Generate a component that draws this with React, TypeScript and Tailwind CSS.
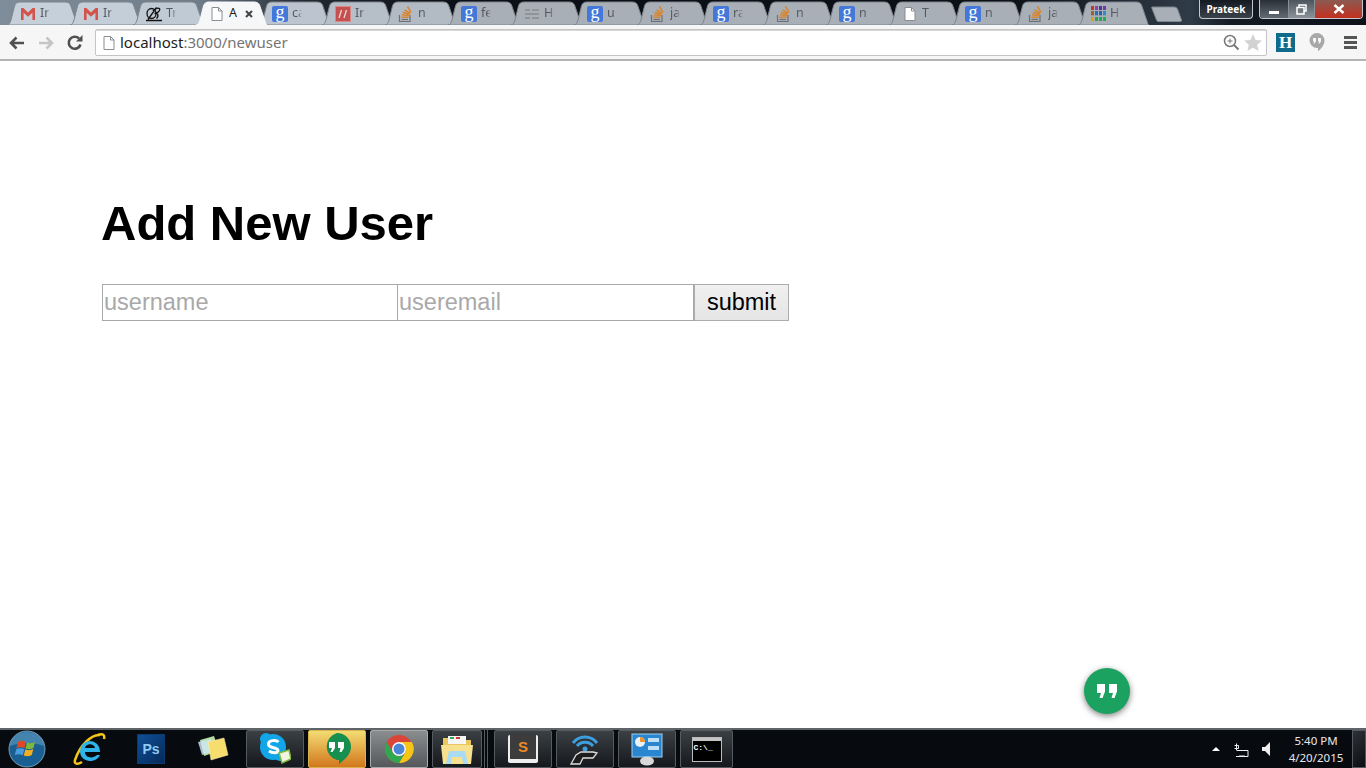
// Chrome on Windows 7 showing the "Add New User" form.

type TabKind = 'gmail' | 'pen' | 'page' | 'google' | 'slash' | 'stack' | 'list' | 'grid';

const tabs: { kind: TabKind; label: string; active?: boolean; tone?: string }[] = [
  { kind: 'gmail', label: 'Ir', tone: '#c6d0db' },
  { kind: 'gmail', label: 'Ir', tone: '#c4ced9' },
  { kind: 'pen', label: 'Tr', tone: '#c0cad5' },
  { kind: 'page', label: 'A', active: true },
  { kind: 'google', label: 'ca', tone: '#bcc5cf' },
  { kind: 'slash', label: 'Ir', tone: '#b6bec8' },
  { kind: 'stack', label: 'n', tone: '#b2bac3' },
  { kind: 'google', label: 'fe' },
  { kind: 'list', label: 'H' },
  { kind: 'google', label: 'u' },
  { kind: 'stack', label: 'ja' },
  { kind: 'google', label: 'ra' },
  { kind: 'stack', label: 'n' },
  { kind: 'google', label: 'n' },
  { kind: 'page', label: 'T' },
  { kind: 'google', label: 'n' },
  { kind: 'stack', label: 'ja' },
  { kind: 'grid', label: 'H' },
];

function PageGlyph() {
  return (
    <svg width="16" height="16" viewBox="0 0 16 16" fill="none">
      <path d="M3 1.5h6.5L13 5v9.5H3z" fill="#fff" stroke="#8a8d91" />
      <path d="M9.5 1.5V5H13" stroke="#8a8d91" />
    </svg>
  );
}

function Favicon({ kind }: { kind: TabKind }) {
  if (kind === 'page') return <PageGlyph />;
  if (kind === 'gmail') {
    return (
      <svg width="16" height="16" viewBox="0 0 16 16">
        <path d="M1 2h2.400L8 6.400 12.600 2H15v12h-2.600V6.800L8 10.800 3.600 6.800V14H1z" fill="#d2544a" />
      </svg>
    );
  }
  if (kind === 'google') {
    return (
      <div className="flex h-4 w-4 items-center justify-center rounded-[2px] bg-[#4478d8] pb-[3px] font-['Liberation_Serif',serif] text-[18px] leading-none text-white">
        g
      </div>
    );
  }
  if (kind === 'pen') {
    return (
      <svg width="16" height="16" viewBox="0 0 16 16" fill="none" stroke="#111" strokeWidth="1.300">
        <ellipse cx="5.500" cy="7.500" rx="4.500" ry="5" />
        <path d="M2 13.500 10.500 1.500M7 5c3-4 8-3.500 6.500-.5S10 7 8.500 7.500c3-.5 5 1.500 2 5M0 14.500h16" />
      </svg>
    );
  }
  if (kind === 'slash') {
    return (
      <svg width="16" height="16" viewBox="0 0 16 16" fill="none">
        <rect x="0.5" y="0.5" width="15" height="15" fill="#c4504f" stroke="#d88a88" />
        <path d="M6.5 4 4 12M11.5 4 9 12" stroke="#f3d5d3" strokeWidth="1.3" />
      </svg>
    );
  }
  if (kind === 'stack') {
    return (
      <svg width="16" height="16" viewBox="0 0 16 16" fill="none">
        <path d="M1.500 9v6.500h10.500V9" stroke="#6e7073" strokeWidth="1.200" />
        <path d="M3.500 13.500h6.500" stroke="#6e7073" strokeWidth="1.200" />
        <path d="M3.500 11.200h7M4 8.800l6.800.8M4.800 6.200l6.500 2M6.500 3.800l5.800 3.500M9.500 .5l3.500 5.800" stroke="#d9852c" strokeWidth="1.500" />
      </svg>
    );
  }
  if (kind === 'list') {
    return (
      <svg width="16" height="16" viewBox="0 0 16 16" fill="#8f9499">
        <rect x="1" y="3" width="5" height="2" />
        <rect x="8" y="3" width="7" height="2" />
        <rect x="1" y="7" width="14" height="2" />
        <rect x="1" y="11" width="5" height="2" />
        <rect x="8" y="11" width="7" height="2" />
      </svg>
    );
  }
  const colors = ['#c0392b', '#8e44ad', '#5b2fa0', '#6a3ea8', '#a0622a', '#2c6fb8', '#2a62b0', '#2f8fc0', '#d8a016', '#2ba24c', '#27a84f', '#1fae58'];
  return (
    <div className="grid h-[15px] w-[15px] grid-cols-4 gap-px">
      {colors.map((color, i) => (
        <svg key={i} viewBox="0 0 3 4" preserveAspectRatio="none" className="h-full w-full">
          <rect width="3" height="4" fill={color} />
        </svg>
      ))}
    </div>
  );
}

function TabShape({ fill, stroke }: { fill: string; stroke: string }) {
  return (
    <svg viewBox="0 0 71 24" width="71" height="24" className="absolute inset-0">
      <path d="M0 24C2 24 3 22 4 19L7.500 5C8.500 2 10 1 13 1H58C61 1 62.500 2 63.500 4L69 20C70 23 70 24 71 24Z" fill={fill} stroke={stroke} strokeWidth="1" />
    </svg>
  );
}

function Tab({ kind, label, active, tone = '#a9afb7' }: { kind: TabKind; label: string; active?: boolean; tone?: string }) {
  return (
    <div className={active ? 'relative z-10 -mr-2 h-6 w-[71px] shrink-0' : 'relative -mr-2 h-6 w-[71px] shrink-0'}>
      <TabShape fill={active ? '#f6f7f8' : tone} stroke={active ? '#f6f7f8' : '#7f858d'} />
      <div className="relative flex h-6 items-center pl-[13px] pt-px">
        <Favicon kind={kind} />
        <span
          className={
            active
              ? "ml-[4px] w-[12px] overflow-hidden font-['Noto_Sans',sans-serif] text-[12.500px] text-[#222]"
              : "ml-[4px] w-[10px] overflow-hidden font-['Noto_Sans',sans-serif] text-[12.500px] text-[#555a60] [mask-image:linear-gradient(90deg,#000_60%,transparent)]"
          }
        >
          {label}
        </span>
        {active && (
          <svg width="10" height="10" viewBox="0 0 10 10" className="ml-[3px]" stroke="#444" strokeWidth="2">
            <path d="M2 2l6 6M8 2 2 8" />
          </svg>
        )}
      </div>
    </div>
  );
}

function WindowControls() {
  return (
    <div className="absolute right-[3px] top-0 flex text-white">
      <div className="mr-[6px] flex h-[19px] w-[54px] items-center justify-center rounded-b-[4px] border border-t-0 border-[#c3c8ce] bg-[linear-gradient(#141a21,#3a424b)] font-['Noto_Sans',sans-serif] text-[10px] font-bold">
        Prateek
      </div>
      <div className="flex h-[19px] overflow-hidden rounded-b-[4px] border border-t-0 border-[#c3c8ce]">
        <div className="flex w-[29px] items-end justify-center border-r border-[#8b9097] bg-[linear-gradient(#2a3038,#626a73)] pb-[4px]">
          <div className="h-[3px] w-[10px] bg-white" />
        </div>
        <div className="flex w-[26px] items-center justify-center border-r border-[#8b9097] bg-[linear-gradient(#4c545e,#8b929a)]">
          <svg width="11" height="11" viewBox="0 0 11 11" fill="none" stroke="#fff" strokeWidth="1.500">
            <path d="M3 3V1h7v6H8M1 3.500h7v6.500H1z" />
          </svg>
        </div>
        <div className="flex w-[47px] items-center justify-center bg-[linear-gradient(#8c5a52,#c4301f)]">
          <svg width="12" height="10" viewBox="0 0 12 10" stroke="#fff" strokeWidth="2.400">
            <path d="M1.500 1l9 8M10.500 1l-9 8" />
          </svg>
        </div>
      </div>
    </div>
  );
}

function TabStrip() {
  return (
    <div className="relative h-[25px] shrink-0 bg-[linear-gradient(90deg,#7f8d9b_0px,#6e7b88_200px,#242a33_300px,#0b0f16_450px,#0b0f16_1000px,#2f3b47_1190px,#141b24_1230px,#0d1219_1366px)] pl-[7px]">
      <div className="flex h-[25px] items-end">
        {tabs.map((tab, i) => (
          <Tab key={i} {...tab} />
        ))}
        <svg width="32" height="16" viewBox="0 0 32 16" className="ml-[10px] mb-[3px] shrink-0">
          <path d="M1 1H23C25 1 26 2 26.500 3L30.500 14C31 15 30 15.500 29 15.500H8C6.500 15.500 6 15 5.500 14L1 2.500C.5 1.500 .5 1 1 1Z" fill="#a9afb7" stroke="#7f858d" />
        </svg>
      </div>
      <WindowControls />
    </div>
  );
}

function Toolbar() {
  return (
    <div className="flex h-[36px] shrink-0 items-center border-b-2 border-[#b4b4b4] bg-[#f6f6f6] pt-px">
      <svg width="18" height="16" viewBox="0 0 18 16" className="ml-2" fill="none" stroke="#505050" strokeWidth="2.600">
        <path d="M16 8H3M8.500 2.500 3 8l5.500 5.500" />
      </svg>
      <svg width="18" height="16" viewBox="0 0 18 16" className="ml-[11px]" fill="none" stroke="#c5c5c5" strokeWidth="2.600">
        <path d="M2 8h13M9.500 2.500 15 8l-5.500 5.500" />
      </svg>
      <svg width="18" height="18" viewBox="0 0 18 18" className="ml-[11px]" fill="none">
        <path d="M14.500 10.500A6 6 0 1 1 13 4.500" stroke="#505050" strokeWidth="2.600" />
        <path d="M10 7.500h6.500V1z" fill="#505050" />
      </svg>
      <div className="ml-[11px] flex h-[27px] w-[1172px] items-center rounded-[2px] border border-[#c4c4c4] bg-white pl-[5px] pr-1 shadow-[inset_0_1px_0_#d8d8d8]">
        <PageGlyph />
        <span className="ml-[3px] font-['Noto_Sans',sans-serif] text-[15px] text-[#222]">
          localhost<span className="text-[#757575]">:3000/newuser</span>
        </span>
        <svg width="17" height="17" viewBox="0 0 17 17" className="ml-auto" fill="none" stroke="#777" strokeWidth="1.500">
          <circle cx="7" cy="7" r="5.500" />
          <path d="M4.500 7h5M7 4.500v5" strokeWidth="1" />
          <path d="M11 11l4.500 4.500" strokeWidth="2" />
        </svg>
        <svg width="18" height="17" viewBox="0 0 18 17" className="ml-[4px]" fill="#d2d2d2">
          <path d="M9 0l2.600 5.900 6.400.6-4.800 4.200 1.400 6.300L9 13.800 3.400 17l1.400-6.300L0 6.500l6.400-.6z" />
        </svg>
      </div>
      <div className="ml-[9px] flex h-[19px] w-[19px] items-center justify-center bg-[#0f6a8b] font-['Liberation_Serif',serif] text-[17px] font-bold leading-none text-white">
        H
      </div>
      <svg width="16" height="19" viewBox="0 0 16 19" className="ml-[14px]">
        <path d="M8 0a7.500 7.500 0 0 1 7.500 7.500c0 5-4 8.500-6.500 11v-3.500H8A7.500 7.500 0 0 1 8 0z" fill="#a8a8a8" />
        <path d="M4 5h3v3.500L5.500 10.500H4.500L5 8.500H4zM9 5h3v3.500L10.500 10.500H9.500L10 8.500H9z" fill="#f6f6f6" />
      </svg>
      <div className="ml-[19px] flex w-[13px] flex-col gap-[2px]">
        <div className="h-[3px] bg-[#555]" />
        <div className="h-[3px] bg-[#555]" />
        <div className="h-[3px] bg-[#555]" />
      </div>
    </div>
  );
}

function UserForm() {
  return (
    <main className="relative flex-1 px-[102px] pt-[130px] font-['Liberation_Sans',sans-serif]">
      <h1 className="-ml-px text-[49px] font-bold leading-[64px] text-black">Add New User</h1>
      <form className="mt-[29px] flex">
        <input
          placeholder="username"
          className="h-[37px] w-[296px] border border-[#a9a9a9] pl-px pr-[2px] text-[23.500px] placeholder:text-[#a9a9a9]"
        />
        <input
          placeholder="useremail"
          className="h-[37px] w-[296px] border border-[#a9a9a9] border-l-0 pl-px pr-[2px] text-[23.500px] placeholder:text-[#a9a9a9]"
        />
        <button
          type="button"
          className="h-[37px] w-[95px] border border-[#acacac] bg-[linear-gradient(#f0f0f0,#e5e5e5)] pb-[2px] text-[23.500px] text-black"
        >
          submit
        </button>
      </form>
      <div className="absolute bottom-[14px] left-[1084px] flex h-[46px] w-[46px] items-center justify-center rounded-full bg-[#1ba261] shadow-[0_2px_6px_rgba(0,0,0,0.5)]">
        <svg width="22" height="14" viewBox="0 0 22 14" fill="#fff">
          <path d="M1 0h8v7.500L6.500 14H3.500L5 9H1zM13 0h8v7.500L18.500 14H15.500L17 9H13z" />
        </svg>
      </div>
    </main>
  );
}

function TaskButton({ children, width = 'w-[58px]', bg = 'bg-[linear-gradient(#3b4045,#15181c)]', border = 'border-[#565b60]' }: { children: React.ReactNode; width?: string; bg?: string; border?: string }) {
  return <div className={`flex h-[38px] items-center justify-center rounded-[2px] border ${width} ${bg} ${border}`}>{children}</div>;
}

function Taskbar() {
  return (
    <footer className="flex h-10 shrink-0 items-center border-t-2 border-[#5f6469] bg-[#070b10] text-white">
      <div className="flex w-[58px] justify-center pr-1">
        <svg width="38" height="38" viewBox="0 0 38 38">
          <circle cx="19" cy="19" r="18" fill="#1a5f92" stroke="#8fb4cc" strokeWidth="0.800" />
          <path d="M2 16a17 14 0 0 1 34 0c-10-4-24-4-34 0z" fill="#6fa8cc" opacity="0.500" />
          <path d="M10 12c3-2 5-1 8 0l-1.500 6c-3-1-5-1-8 0z" fill="#dc4a2a" />
          <path d="M19 12.500c3 1 5 1 8-.5l-1.500 6c-3 1.500-5 1.500-8 .5z" fill="#7cb83b" />
          <path d="M8.300 19c3-1 5-1 8 0l-1.500 6c-3-1-5-1-8 0z" fill="#4a9ae0" />
          <path d="M17.300 19.500c3 1 5 1 8-.5l-1.500 6c-3 1.500-5 1.500-8 .5z" fill="#f2b01e" />
        </svg>
      </div>
      <div className="flex w-[62px] justify-center">
        <svg width="34" height="36" viewBox="0 0 34 36" fill="none">
          <path d="M28 4C20 3 8 14 3 29c-1 4 2 5 7 2" stroke="#f5c518" strokeWidth="2.500" />
          <path d="M26 4c5-2 7 0 6 4" stroke="#f5c518" strokeWidth="2.500" />
          <path d="M8 20a10 10 0 0 1 20 0v1H13c0 6 8 7 12 3h3c-4 9-20 8-20-4zM13 17h10c-1-5-9-5-10 0z" fill="#2fb4ea" fillRule="evenodd" />
        </svg>
      </div>
      <div className="flex w-[62px] justify-center">
        <div className="flex h-[30px] w-[28px] items-center justify-center border border-[#0b3a6e] bg-[linear-gradient(135deg,#0f4f97,#062a5a)] font-['Liberation_Sans',sans-serif] text-[14px] font-bold text-[#8ecbf4]">
          Ps
        </div>
      </div>
      <div className="flex w-[64px] justify-center pr-1">
        <svg width="34" height="28" viewBox="0 0 34 28">
          <path d="M5 5 19 1l5 15-15 5z" fill="#b5dc9e" />
          <path d="M3 7 16 4l3 12-12 4z" fill="#cfe7f7" opacity="0.800" />
          <path d="M13 7 29 3l4 17-17 5z" fill="#f7dd6d" stroke="#fff3b5" strokeWidth="0.500" />
        </svg>
      </div>
      <div className="flex gap-1">
        <TaskButton>
          <svg width="32" height="34" viewBox="0 0 32 34">
            <circle cx="14" cy="15" r="13" fill="#12a5e8" />
            <circle cx="7" cy="7" r="6" fill="#12a5e8" />
            <circle cx="21" cy="23" r="6" fill="#12a5e8" />
            <path d="M19.500 10C17 7.500 9 8 9.500 12.500c.5 4 9.500 2.500 9.500 6 0 3-6 2.500-9 .5" fill="none" stroke="#fff" strokeWidth="3" />
            <path d="M20 21l10-3 2 9-9 4z" fill="#f1f5df" stroke="#7cb83b" strokeWidth="1.500" />
          </svg>
        </TaskButton>
        <TaskButton bg="bg-[linear-gradient(#f3dc73,#d2771c)]" border="border-[#d8b24a]">
          <svg width="30" height="34" viewBox="0 0 30 34">
            <path d="M15 1a14 14 0 0 1 14 14c0 8-7 13-12 17v-4h-2A14 14 0 0 1 15 1z" fill="#168f4f" />
            <path d="M7 10h6v6l-2.500 4H8.500L10 16H7zM16 10h6v6l-2.500 4h-2L18.500 16H16z" fill="#fff" />
          </svg>
        </TaskButton>
        <TaskButton bg="bg-[linear-gradient(#8b8d8f,#55585a)]" border="border-[#a8aaac]">
          <svg width="30" height="30" viewBox="0 0 30 30">
            <circle cx="15" cy="15" r="14" fill="#dc4437" />
            <path d="M15 8h12.800A14 14 0 0 1 15 29l6.500-11A7.500 7.500 0 0 0 15 8z" fill="#f5c518" />
            <path d="M2.800 8A14 14 0 0 0 15 29l6.500-11a7.500 7.500 0 0 1-13 0z" fill="#2fa84f" />
            <circle cx="15" cy="15" r="7" fill="#fff" />
            <circle cx="15" cy="15" r="5.500" fill="#4a86d8" />
          </svg>
        </TaskButton>
        <div className="flex">
          <TaskButton width="w-[50px]">
            <svg width="34" height="32" viewBox="0 0 34 32">
              <path d="M3 5h11l2 2h15v24H3z" fill="#e9c65e" />
              <path d="M8 3h18v8H8z" fill="#f6f6f6" />
              <path d="M10 4h4v2h-4z" fill="#35a853" />
              <path d="M16 4h4v2h-4z" fill="#d33" />
              <path d="M1 12h32l-2 19H3z" fill="#f7e08e" />
              <path d="M9 18h16l3 13h-5l-1-7H12l-1 7H6z" fill="#a9dcf2" />
            </svg>
          </TaskButton>
          <div className="ml-px h-[38px] w-[2px] border-r border-[#565b60]" />
          <div className="ml-px h-[38px] w-[2px] border-r border-[#565b60]" />
        </div>
      </div>
      <div className="ml-[6px] flex gap-1">
        <TaskButton>
          <div className="flex h-[28px] w-[30px] items-center justify-center rounded-[2px] border-x-2 border-b-4 border-[#eee] bg-[#3c3c3c] font-['Liberation_Sans',sans-serif] text-[15px] font-bold text-[#f08a24]">
            S
          </div>
        </TaskButton>
        <TaskButton>
          <svg width="32" height="34" viewBox="0 0 32 34" fill="none">
            <path d="M4 11c6-8 18-8 24 0M8 14c4-5 12-5 16 0" stroke="#3b9fe0" strokeWidth="3" />
            <circle cx="16" cy="17" r="2.500" fill="#3b9fe0" />
            <path d="M2 32l5-9 5-3h12l4 1-4 5H14l-3 6z" fill="#1d1d1d" stroke="#ddd" strokeWidth="1.300" />
          </svg>
        </TaskButton>
        <TaskButton>
          <svg width="32" height="34" viewBox="0 0 32 34">
            <rect x="1" y="2" width="30" height="23" fill="#2a86cf" stroke="#9bd0f0" />
            <circle cx="9" cy="10" r="5" fill="#e9f2fa" />
            <path d="M9 10V5a5 5 0 0 1 5 5z" fill="#f0952b" />
            <rect x="17" y="6" width="11" height="4" fill="#bfe0f6" />
            <rect x="17" y="14" width="11" height="4" fill="#bfe0f6" />
            <ellipse cx="16" cy="29" rx="7" ry="4.500" fill="#d8d8d8" />
          </svg>
        </TaskButton>
        <TaskButton width="w-[53px]">
          <div className="flex h-[25px] w-[30px] flex-col border border-[#bbb] bg-black">
            <div className="h-[3px] bg-[#c4c4c4]" />
            <span className="pl-px font-['Liberation_Mono',monospace] text-[8px] font-bold leading-[14px] text-white">C:\_</span>
          </div>
        </TaskButton>
      </div>
      <div className="ml-auto flex items-center">
        <div className="h-0 w-0 border-x-[4px] border-b-[4px] border-x-transparent border-b-white" />
        <svg width="16" height="16" viewBox="0 0 16 16" className="ml-[13px]" fill="none" stroke="#eee">
          <path d="M3.500 9.500v-7M1.500 4.500h4v3h-4M4 9.500h11v6H3" />
          <path d="M6 15.500h6" strokeWidth="2" />
        </svg>
        <svg width="10" height="14" viewBox="0 0 10 14" className="ml-[12px]">
          <path d="M1 5h3l5-5v14L4 9H1z" fill="#eee" />
        </svg>
        <div className="ml-[9px] w-[72px] text-center font-['Noto_Sans',sans-serif] text-[11.500px] leading-[17px] text-[#e8e8e8]">
          <div>5:40 PM</div>
          <div>4/20/2015</div>
        </div>
        <div className="h-[38px] w-[14px] border border-[#55595e] bg-[linear-gradient(135deg,#2d3238,#0b0e12)]" />
      </div>
    </footer>
  );
}

export default function App() {
  return (
    <div className="flex h-screen flex-col overflow-hidden bg-white">
      <TabStrip />
      <Toolbar />
      <UserForm />
      <Taskbar />
    </div>
  );
}
